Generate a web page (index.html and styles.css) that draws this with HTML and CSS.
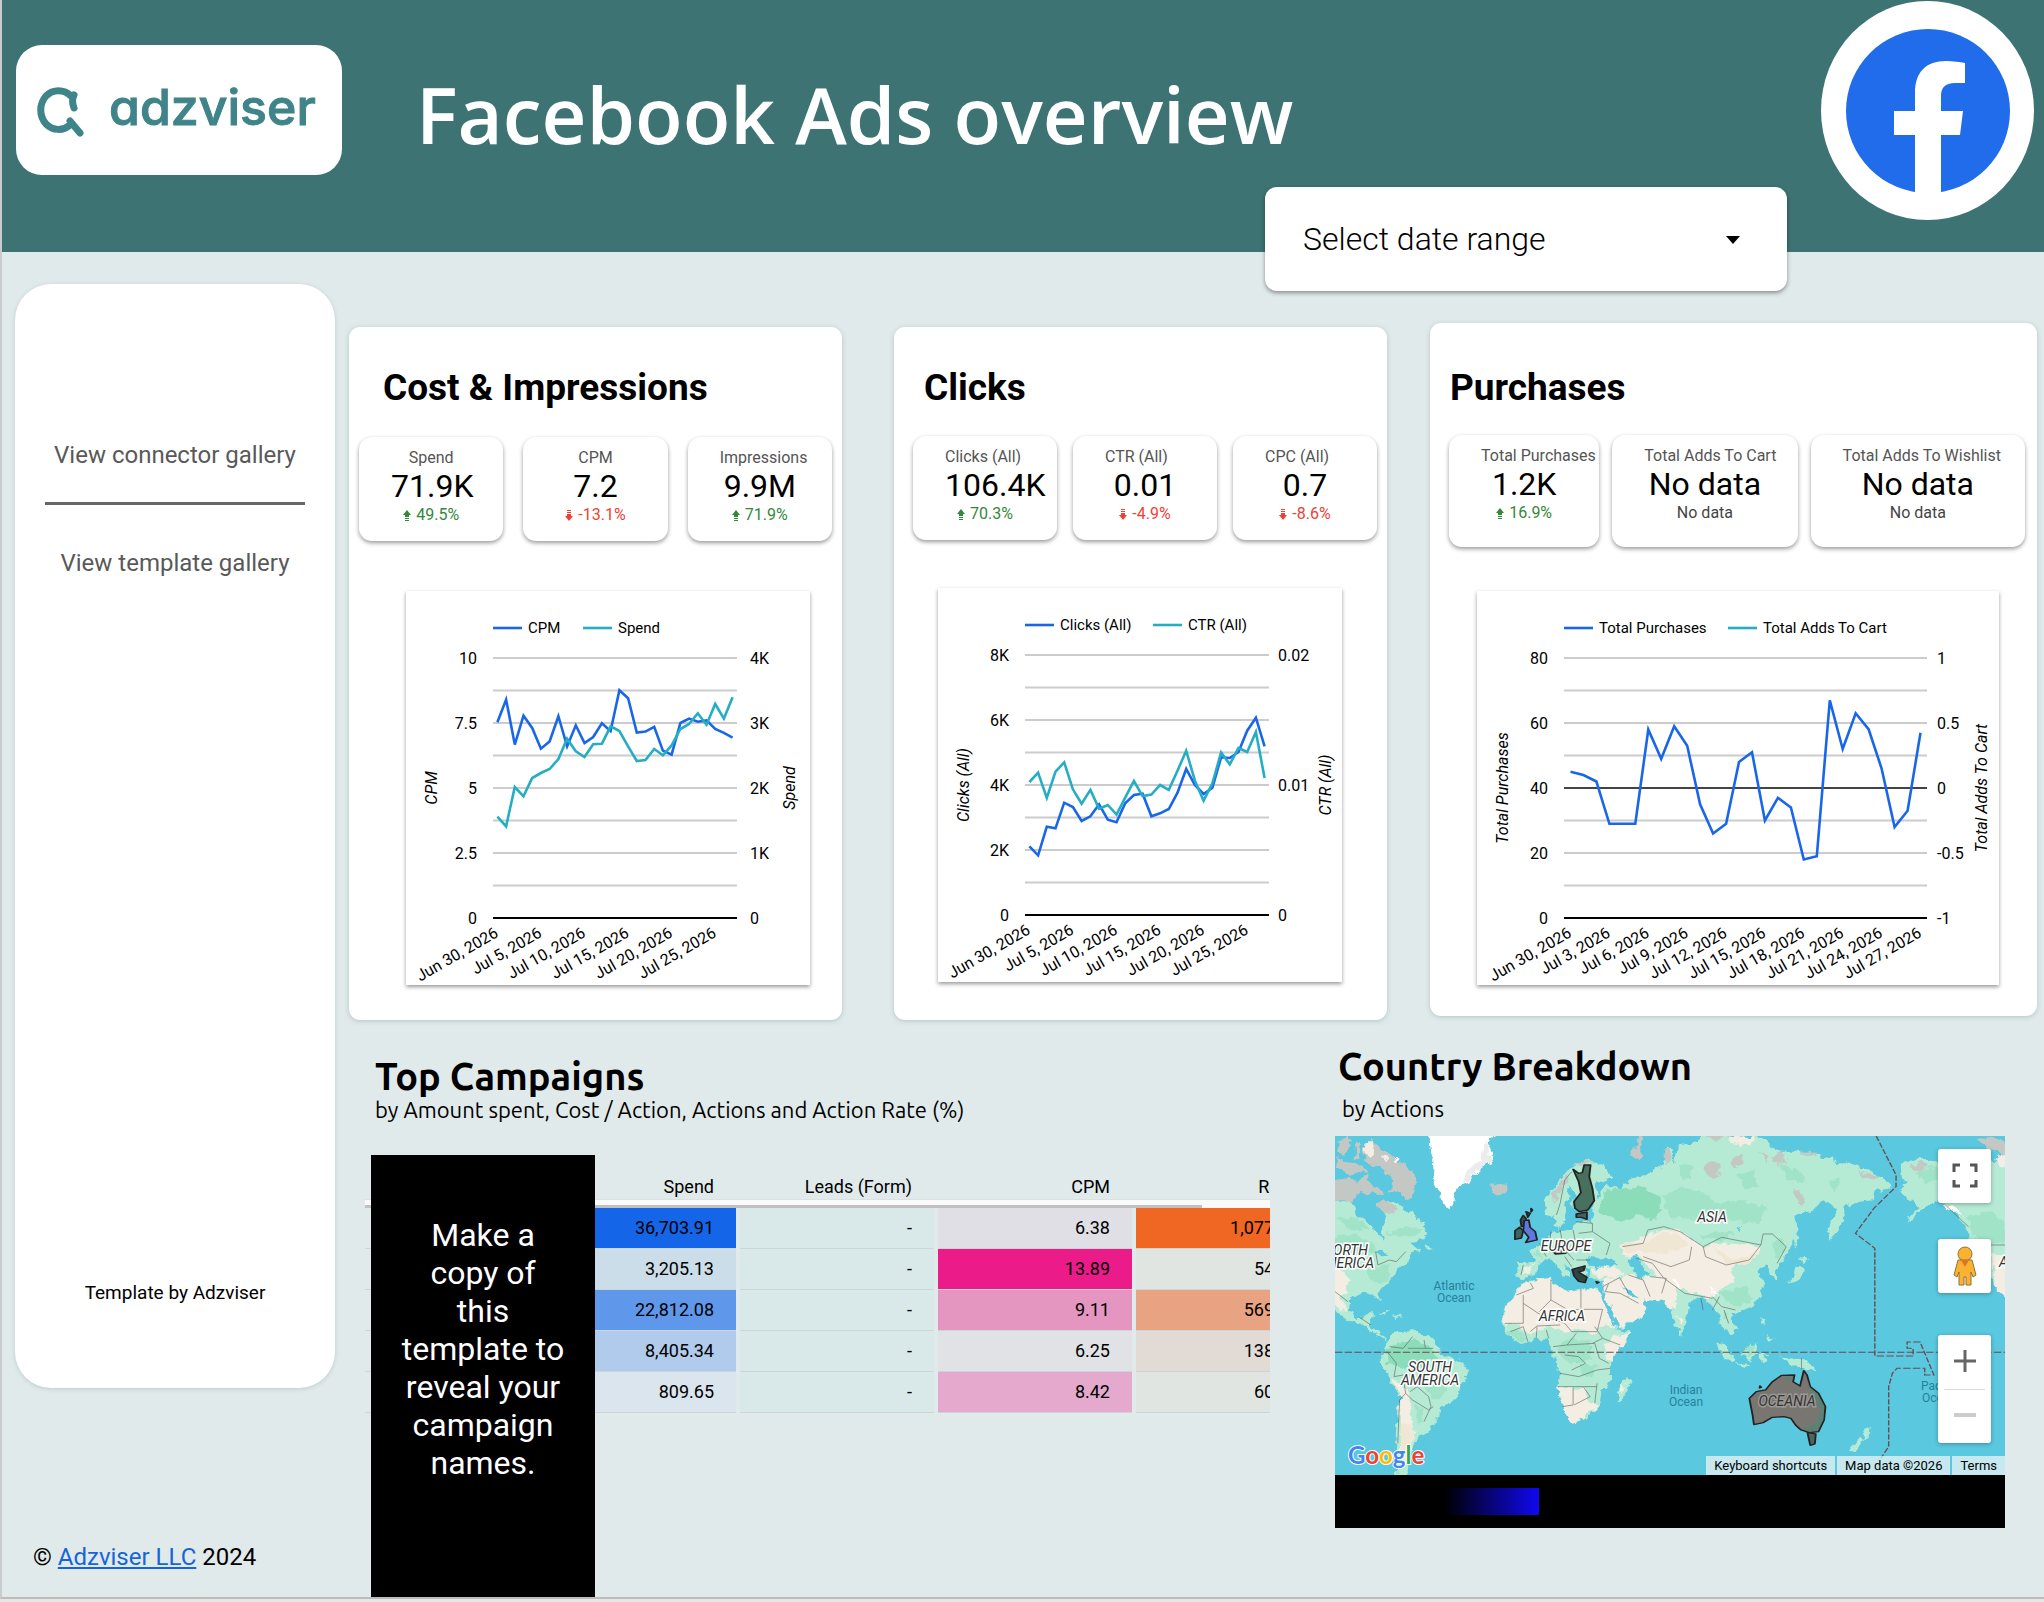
FILE: index.html
```html
<!DOCTYPE html>
<html lang="en">
<head>
    <meta charset="UTF-8">
    <meta name="viewport" content="width=device-width, initial-scale=1.0">
    <title>Facebook Ads overview</title>
    <link rel="stylesheet" href="styles.css">
</head>
<body>
    <div class="page">
        <header class="header">
            <div class="brand">
                <svg class="brand-icon" width="50" height="64" viewBox="0 0 50 64" fill="none" stroke="#3f8488" stroke-width="7" stroke-linecap="round" stroke-linejoin="round">
                    <path d="M37 10 C35 14 35 18 37 23 M34 11 C27 4 16 4 9 11 C2 19 2 31 9 39 C16 46 26 46 33 40"/>
                    <path d="M33 36 L43 48"/>
                </svg>
                <span class="brand-name">adzviser</span>
            </div>
            <h1>Facebook Ads overview</h1>
            <svg class="fb" width="213" height="219" viewBox="0 0 213 219">
                <ellipse cx="106.500" cy="109.500" rx="106.500" ry="109.500" fill="#fff"/>
                <circle cx="107" cy="110" r="82" fill="#206cea"/>
                <path fill="#fff" d="M94 195 V134 H73 V110 H94 V92 C94 71 105 60 125 60 C132 60 139 61 144 62 V82 H134 C124 82 120 87 120 95 V110 H142 L139 134 H120 V195 Z"/>
            </svg>
            <div class="date-range">
                <select aria-label="Date range">
                    <option>Select date range</option>
                </select>
                <svg width="14" height="8" viewBox="0 0 14 8"><path d="M0 0 H14 L7 8 Z"/></svg>
            </div>
        </header>

        <div class="layout">
            <aside class="side">
                <nav class="menu">
                    <a href="#">View connector gallery</a>
                    <hr>
                    <a href="#">View template gallery</a>
                    <p class="credit">Template by Adzviser</p>
                </nav>
                <footer class="copyright">© <a href="#">Adzviser LLC</a> 2024</footer>
            </aside>

            <main class="main">
                <div class="cards">
                    <section class="card cost">
                        <h2>Cost &amp; Impressions</h2>
                        <div class="kpis">
                            <div class="kpi">
                                <div class="label">Spend</div>
                                <div class="value">71.9K</div>
                                <div class="delta up"><svg width="8" height="12" viewBox="0 0 8 12"><path d="M4 0 L8 5 H6 V7 H2 V5 H0 Z M2 8 H6 V9 H2 Z M2 10 H6 V11 H2 Z"/></svg>49.5%</div>
                            </div>
                            <div class="kpi">
                                <div class="label">CPM</div>
                                <div class="value">7.2</div>
                                <div class="delta down"><svg width="8" height="12" viewBox="0 0 8 12"><path d="M4 11 L8 6 H6 V4 H2 V6 H0 Z M2 2 H6 V3 H2 Z M2 0 H6 V1 H2 Z"/></svg>-13.1%</div>
                            </div>
                            <div class="kpi">
                                <div class="label">Impressions</div>
                                <div class="value">9.9M</div>
                                <div class="delta up"><svg width="8" height="12" viewBox="0 0 8 12"><path d="M4 0 L8 5 H6 V7 H2 V5 H0 Z M2 8 H6 V9 H2 Z M2 10 H6 V11 H2 Z"/></svg>71.9%</div>
                            </div>
                        </div>
                        <div class="chart" id="chart-cost"></div>
                    </section>

                    <section class="card clicks">
                        <h2>Clicks</h2>
                        <div class="kpis">
                            <div class="kpi">
                                <div class="label">Clicks (All)</div>
                                <div class="value">106.4K</div>
                                <div class="delta up"><svg width="8" height="12" viewBox="0 0 8 12"><path d="M4 0 L8 5 H6 V7 H2 V5 H0 Z M2 8 H6 V9 H2 Z M2 10 H6 V11 H2 Z"/></svg>70.3%</div>
                            </div>
                            <div class="kpi">
                                <div class="label">CTR (All)</div>
                                <div class="value">0.01</div>
                                <div class="delta down"><svg width="8" height="12" viewBox="0 0 8 12"><path d="M4 11 L8 6 H6 V4 H2 V6 H0 Z M2 2 H6 V3 H2 Z M2 0 H6 V1 H2 Z"/></svg>-4.9%</div>
                            </div>
                            <div class="kpi">
                                <div class="label">CPC (All)</div>
                                <div class="value">0.7</div>
                                <div class="delta down"><svg width="8" height="12" viewBox="0 0 8 12"><path d="M4 11 L8 6 H6 V4 H2 V6 H0 Z M2 2 H6 V3 H2 Z M2 0 H6 V1 H2 Z"/></svg>-8.6%</div>
                            </div>
                        </div>
                        <div class="chart" id="chart-clicks"></div>
                    </section>

                    <section class="card purchases">
                        <h2>Purchases</h2>
                        <div class="kpis">
                            <div class="kpi">
                                <div class="label">Total Purchases</div>
                                <div class="value">1.2K</div>
                                <div class="delta up"><svg width="8" height="12" viewBox="0 0 8 12"><path d="M4 0 L8 5 H6 V7 H2 V5 H0 Z M2 8 H6 V9 H2 Z M2 10 H6 V11 H2 Z"/></svg>16.9%</div>
                            </div>
                            <div class="kpi">
                                <div class="label">Total Adds To Cart</div>
                                <div class="value">No data</div>
                                <div class="delta">No data</div>
                            </div>
                            <div class="kpi">
                                <div class="label">Total Adds To Wishlist</div>
                                <div class="value">No data</div>
                                <div class="delta">No data</div>
                            </div>
                        </div>
                        <div class="chart" id="chart-purchases"></div>
                    </section>
                </div>

                <div class="lower">
                    <section class="campaigns">
                        <h3>Top Campaigns</h3>
                        <p class="sub">by Amount spent, Cost / Action, Actions and Action Rate (%)</p>
                        <div class="table-wrap">
                            <table>
                                <thead>
                                    <tr><th class="name"></th><th>Spend</th><th>Leads (Form)</th><th>CPM</th><th>Reach</th></tr>
                                </thead>
                                <tbody>
                                    <tr><td></td><td style="background-color: #1565e8;">36,703.91</td><td>-</td><td style="background-color: #e1dfe6;">6.38</td><td style="background-color: #f06623;">1,077,214</td></tr>
                                    <tr><td></td><td style="background-color: #cbdde9;">3,205.13</td><td>-</td><td style="background-color: #eb1b8a;">13.89</td><td style="background-color: #e1e5e2;">54,120</td></tr>
                                    <tr><td></td><td style="background-color: #5f98ea;">22,812.08</td><td>-</td><td style="background-color: #e496c1;">9.11</td><td style="background-color: #e8a482;">569,338</td></tr>
                                    <tr><td></td><td style="background-color: #b0cbeb;">8,405.34</td><td>-</td><td style="background-color: #e1e2e6;">6.25</td><td style="background-color: #e2dad5;">138,902</td></tr>
                                    <tr><td></td><td style="background-color: #dbe5ed;">809.65</td><td>-</td><td style="background-color: #e4a9cd;">8.42</td><td style="background-color: #e1e5e2;">60,417</td></tr>
                                </tbody>
                            </table>
                            <div class="scrollbar"></div>
                            <div class="notice">Make a<br>copy of<br>this<br>template to<br>reveal your<br>campaign<br>names.</div>
                        </div>
                    </section>

                    <section class="countries">
                        <h3>Country Breakdown</h3>
                        <p class="sub">by Actions</p>
                        <div class="map">
                            <svg class="map-canvas" viewBox="0 0 670 339">
                                <defs>
                                    <filter id="coast" x="0" y="0" width="100%" height="100%">
                                        <feTurbulence type="fractalNoise" baseFrequency="0.12" numOctaves="3" seed="4"/>
                                        <feDisplacementMap in="SourceGraphic" scale="9" xChannelSelector="R" yChannelSelector="G"/>
                                    </filter>
                                    <clipPath id="frame"><rect width="670" height="339"/></clipPath>
                                </defs>
                                <rect width="670" height="339" fill="#5ac8de"/>
                                <g clip-path="url(#frame)">
                                <g filter="url(#coast)">
                                <g transform="scale(0.4614 0.3333) translate(-32 -318)">
                                    <!-- land -->
                                    <g fill="#b5ead4">
                                        <path d="M20 505 L60 515 78 530 82 560 110 585 128 615 138 635 134 590 142 565 136 545 142 512 165 518 185 550 200 545 225 590 232 608 225 630 195 635 200 645 215 662 195 672 190 700 165 715 157 740 140 770 128 788 134 815 118 800 110 790 90 792 65 805 62 840 75 868 90 862 100 850 118 850 105 880 118 905 140 920 150 930 135 925 110 905 90 885 65 875 45 855 20 830 Z M225 645 L245 658 228 660 Z"/>
                                        <path d="M150 912 L165 905 180 908 215 905 240 925 255 945 262 970 290 985 318 1005 320 1030 305 1060 300 1100 285 1115 262 1135 255 1160 235 1200 215 1215 205 1240 195 1265 190 1300 185 1345 165 1345 162 1260 165 1180 175 1100 155 1060 135 1010 132 985 145 950 Z"/>
                                        <path d="M438 755 L480 748 500 742 508 765 540 788 570 775 605 780 612 800 625 850 645 895 672 905 665 935 640 970 628 1000 628 1060 610 1080 605 1120 590 1150 570 1170 545 1178 530 1150 515 1080 520 1030 505 975 500 950 490 930 465 925 435 942 415 925 395 890 395 850 420 790 Z"/>
                                        <path d="M665 1040 L670 1060 655 1112 645 1118 645 1085 Z"/>
                                        <path d="M485 530 L490 505 520 450 545 410 575 388 610 405 632 440 620 460 600 450 600 520 575 545 560 540 552 490 542 470 532 520 527 580 515 598 508 560 490 555 Z"/>
                                        <path d="M428 695 L465 698 470 690 452 662 480 645 500 605 540 600 550 575 590 575 590 540 600 505 620 465 650 480 660 460 690 440 720 430 745 400 748 350 762 355 765 400 780 345 820 335 825 308 900 318 960 325 975 345 1000 365 1060 365 1110 390 1150 405 1190 420 1220 445 1240 470 1220 485 1205 475 1200 510 1170 515 1140 530 1135 560 1122 600 1106 632 1102 590 1120 540 1095 515 1060 545 1030 560 1032 600 1022 645 1005 690 990 700 990 752 975 735 970 705 945 720 962 760 955 800 935 830 895 850 890 870 905 890 895 912 880 900 868 880 862 850 850 840 835 800 820 805 800 820 795 860 782 918 765 870 760 825 740 812 700 805 690 810 708 840 695 870 645 893 630 850 612 790 614 755 585 745 580 720 570 705 575 735 560 755 548 725 530 705 540 735 530 740 505 690 490 688 474 700 465 735 435 747 427 738 Z"/>
                                        <path d="M1035 710 L1046 712 1040 750 1010 762 1030 735 Z M1040 680 L1058 692 1045 702 Z M1025 588 L1036 620 1030 660 1024 620 Z"/>
                                        <path d="M857 935 L880 950 902 990 892 1002 870 970 Z M913 965 L945 932 950 965 930 995 915 985 Z M895 1000 L930 1006 920 1014 Z M952 972 L978 968 962 975 970 995 958 1002 Z M956 860 L965 865 960 890 Z M968 915 L985 925 975 935 Z M1000 980 L1045 985 1082 1028 1050 1015 1020 1005 Z"/>
                                        <path d="M1185 1190 L1194 1210 1175 1235 1178 1212 Z M1165 1225 L1175 1232 1160 1265 1146 1262 Z"/>
                                        <path d="M1260 440 L1258 405 1300 380 1335 395 1500 395 1500 820 1465 770 1450 730 1425 660 1400 600 1370 540 1340 510 1310 535 1265 585 1298 530 1280 510 1252 480 1272 460 Z"/>
                                        <path d="M122 842 L150 848 140 852 Z M158 856 L178 858 168 864 Z M246 440 L258 445 255 480 246 470 Z M362 375 L376 380 370 400 Z"/>
                                    </g>
                                    <g fill="#c4c8c4">
                                        <path d="M20 455 L60 440 80 458 100 430 112 460 122 480 105 500 88 485 75 505 65 522 45 505 20 512 Z"/>
                                        <path d="M95 350 L110 330 125 350 150 370 165 392 185 400 195 430 208 455 204 480 190 512 178 495 165 478 150 485 160 455 140 420 118 405 95 390 Z"/>
                                        <path d="M40 330 L60 325 65 345 50 375 38 370 Z M75 340 L88 335 85 385 75 395 Z M35 385 L65 400 90 410 100 425 70 435 45 425 32 415 Z M118 470 L135 480 138 498 118 490 Z M122 520 L140 510 165 530 160 550 140 550 Z"/>
                                        <path d="M366 465 L385 458 402 466 406 480 390 497 374 488 Z"/>
                                        <path d="M692 318 L705 318 690 350 698 388 682 385 676 368 Z M742 360 L756 350 762 380 750 410 Z"/>
                                        <path d="M835 400 L865 400 865 440 850 445 830 420 Z M890 380 L915 375 915 400 895 415 Z M980 375 L1000 365 1010 400 990 405 Z M1165 420 L1215 440 1200 455 1170 435 Z M830 318 L880 318 860 335 Z M1025 470 L1050 500 1045 530 1030 500 Z M755 540 L770 535 768 565 Z M950 365 L970 375 965 395 Z M1035 365 L1075 368 1060 382 Z"/>
                                        <path d="M1275 410 L1300 395 1320 410 1300 425 Z M1430 320 L1500 340 1500 390 1440 350 Z M500 495 L520 460 545 420 530 460 505 520 Z M550 400 L575 390 590 400 565 405 Z"/>
                                    </g>
                                    <!-- forests -->
                                    <g fill="#8bdcb9">
                                        <path d="M600 545 L620 480 660 478 700 470 735 500 740 540 720 570 690 555 650 575 Z"/>
                                        <path d="M140 960 L180 935 205 925 240 955 252 990 205 1020 165 1010 145 1000 Z"/>
                                        <path d="M545 945 L570 940 590 955 585 985 555 1000 535 980 Z"/>
                                    </g>
                                    <g fill="#a0e3c7">
                                        <path d="M515 950 L545 925 585 935 590 985 550 1000 520 985 Z M400 900 L425 900 450 925 435 938 Z M560 1005 L600 1010 590 1040 565 1035 Z"/>
                                        <path d="M32 620 L60 610 110 630 120 670 60 660 32 640 Z M100 720 L150 700 145 750 115 760 Z M35 560 L80 565 110 600 60 595 Z M140 610 L190 590 225 600 190 625 Z"/>
                                        <path d="M740 500 L780 470 840 490 860 520 920 510 970 540 950 580 880 570 820 570 760 560 Z M900 430 L940 420 950 470 920 480 Z M820 620 L850 605 900 615 870 630 Z M1100 450 L1130 440 1110 490 Z M1000 400 L1040 430 1050 460 1010 450 Z M780 400 L810 410 800 450 780 440 Z"/>
                                        <path d="M860 790 L920 770 940 810 900 830 Z M920 955 L940 945 938 975 925 985 Z M1400 560 L1450 540 1484 580 1484 640 1430 640 Z M975 640 L1000 620 1010 660 990 680 Z M870 850 L885 850 882 880 Z"/>
                                        <path d="M225 1070 L260 1050 280 1080 250 1110 Z M205 1130 L225 1140 215 1190 Z M540 520 L550 500 555 540 Z M460 670 L480 660 485 685 Z"/>
                                        <path d="M1290 430 L1330 410 1350 440 1310 460 Z"/>
                                    </g>
                                    <!-- arid areas -->
                                    <g fill="#f4ede3">
                                        <path d="M438 757 L480 750 500 745 508 767 540 790 570 778 605 783 612 800 625 850 645 895 632 890 605 890 600 915 560 900 530 905 500 890 455 908 425 885 397 885 397 850 420 795 Z"/>
                                        <path d="M615 945 L650 912 672 905 665 935 638 970 632 995 618 985 Z"/>
                                        <path d="M513 1070 L548 1074 575 1072 583 1110 598 1130 572 1168 545 1178 530 1150 Z"/>
                                        <path d="M612 752 L640 742 668 735 700 745 730 735 690 680 655 680 650 645 690 630 745 592 790 610 830 650 870 640 955 645 950 675 905 700 890 720 900 745 850 800 800 788 770 770 775 800 765 835 740 812 700 805 708 840 695 868 645 891 630 850 612 790 Z"/>
                                        <path d="M582 716 L640 712 658 730 640 742 600 744 Z M440 705 L462 705 455 735 438 735 Z"/>
                                        <path d="M20 715 L50 722 62 750 55 790 45 800 62 845 45 840 20 810 Z"/>
                                        <path d="M172 1070 L192 1080 196 1150 202 1200 198 1260 188 1300 172 1285 175 1180 Z M155 1045 L175 1060 172 1085 Z"/>
                                        <path d="M1455 670 L1500 680 1500 820 1462 770 Z M880 318 L945 322 930 345 890 340 Z M1462 380 L1500 370 1500 420 1470 410 Z M100 335 L115 340 110 380 98 375 Z M130 375 L150 385 145 400 Z"/>
                                        <path d="M655 1060 L662 1065 652 1095 Z M775 855 L785 865 780 885 Z M550 850 L560 855 555 860 Z"/>
                                    </g>
                                    <path fill="#efe6d4" d="M655 640 L700 640 745 600 780 615 795 650 760 670 700 665 660 670 Z M850 650 L900 690 950 670 930 700 880 705 Z M175 1180 L200 1190 195 1250 175 1260 Z"/>
                                    <!-- inland seas -->
                                    <path fill="#5ac8de" d="M580 690 L590 675 610 690 620 682 648 705 610 712 582 710 Z M668 690 L685 672 700 712 712 738 690 742 678 715 Z M655 768 L675 790 690 805 672 800 Z M606 782 L614 785 640 865 648 893 634 885 Z M120 665 L130 660 150 680 135 682 Z M905 590 L912 580 908 605 Z"/>
                                    <path fill="#fff" d="M232 308 L382 308 365 345 375 370 372 400 350 415 330 440 320 460 300 470 288 500 285 535 270 528 262 505 250 470 245 430 245 380 Z"/>
                                    <path fill="#ececec" d="M362 325 L372 395 335 425 320 455 300 462 325 415 345 390 Z"/>
                                    <path fill="#fff" d="M770 745 L788 775 778 770 765 750 Z M845 765 L865 795 848 785 Z M1330 500 L1345 515 1380 540 1395 565 1360 535 Z M155 375 L170 390 165 398 Z"/>
                                </g>
                                </g>
                                <g transform="scale(0.4614 0.3333) translate(-32 -318)">
                                    <!-- borders -->
                                    <g class="borders">
                                        <path d="M455 758 L462 775 425 795 M440 795 L440 880 400 880 M440 820 L478 855 530 880 M500 748 L500 810 540 842 M565 775 L565 838 612 838 M500 810 L475 845 M540 842 L560 838 M530 880 L545 905 600 905 612 838 M455 905 L470 888 520 885 M412 905 L440 890 450 935 M470 890 L468 925 M490 900 L495 925 M505 950 L535 945 555 910 M535 945 L595 940 605 985 625 1000 M530 975 L560 980 575 1000 545 1020 M520 1030 L560 1040 600 1020 628 1015 M515 1070 L600 1070 M548 1072 L548 1125 525 1130 M570 1070 L585 1100 550 1125 M600 1060 L595 1120 M595 890 L612 925 590 940 M612 925 L650 945"/>
                                        <path d="M612 770 L650 742 M625 760 L618 785 650 790 690 820 M650 745 L668 790 M668 735 L700 750 715 800 M715 740 L750 745 740 790 M685 685 L720 700 745 745 M655 650 L700 640 710 600 745 590 780 605 830 650 M700 680 L760 710 800 690 805 650 M745 745 L790 790 850 805 M830 650 L870 622 955 645 930 690 880 705 835 680 830 650 M955 645 L960 612 980 612 1010 650 990 700 M850 800 L870 830 900 840 M825 805 L830 840 M865 800 L850 840 M875 840 L885 880"/>
                                        <path d="M545 425 L530 450 520 520 512 555 M555 575 L590 580 590 605 560 610 M520 600 L525 640 M548 600 L555 650 M590 605 L628 640 620 675 M500 605 L495 660 M490 665 L530 660 550 690 M530 680 L545 710 M555 690 L585 690 M475 640 L490 680 M440 705 L435 735"/>
                                        <path d="M120 665 L125 705 150 690 165 695 185 665 M32 785 L60 815 M85 862 L110 885 M150 950 L180 955 200 920 M190 955 L245 955 M225 930 L228 955 M145 965 L165 1000 160 1040 180 1035 M195 1085 L210 1070 235 1100 M180 1040 L185 1090 200 1110 235 1140 245 1130 M168 1240 L172 1110 185 1090 M235 1100 L240 1130 225 1175"/>
                                        <path d="M1450 645 H1484 M1340 505 L1370 545 1405 590 M1043 985 V1018"/>
                                    </g>
                                    <!-- countries with data -->
                                    <g class="shaded">
                                        <path fill="#47705f" d="M548 418 L560 430 568 428 572 405 586 405 583 440 590 475 594 512 580 540 562 545 552 535 550 515 565 488 560 455 Z"/>
                                        <path fill="#47605a" d="M555 552 L578 546 578 568 566 562 555 562 Z"/>
                                        <path fill="#3c4a5a" d="M434 570 L440 556 446 565 445 585 436 590 Z M446 545 L455 550 450 562 Z M457 535 L460 540 457 546 Z"/>
                                        <path fill="#5f78e0" d="M442 572 L452 570 455 592 466 605 470 630 445 638 452 622 440 602 Z"/>
                                        <path fill="#3e6468" d="M422 602 L432 592 440 602 436 624 422 628 Z"/>
                                        <path fill="#5d6864" d="M502 662 L520 652 538 655 532 670 510 672 Z"/>
                                        <path fill="#2f4644" d="M546 718 L574 708 571 722 560 726 578 742 574 758 560 754 550 738 Z M598 755 L604 757 600 760 Z"/>
                                        <path fill="#797672" d="M930 1105 L945 1085 965 1080 980 1055 1000 1036 1028 1035 1025 1055 1040 1068 1048 1022 1055 1035 1062 1070 1080 1090 1095 1130 1092 1170 1080 1205 1060 1208 1042 1200 1030 1185 1020 1165 1005 1160 980 1162 960 1178 940 1184 937 1155 Z"/>
                                        <path fill="#50645c" d="M1056 1208 L1074 1212 1072 1242 1062 1246 Z M953 1068 L956 1072 952 1074 Z"/>
                                    </g>
                                    <path fill="#5a8274" d="M1055 1045 L1062 1075 1078 1092 1092 1130 1090 1170 1078 1200 1060 1204 1045 1195 1075 1180 1085 1140 1065 1100 Z M1005 1042 L1022 1042 1018 1055 Z"/>
                                    <!-- equator and date line -->
                                    <path class="dateline" d="M32 967 H1484 M1205 318 L1248 435 1248 470 1200 535 1160 610 1202 655 V978 H1285 V955 H1272 V936 H1300 L1330 1035 H1310 V1015 H1250 L1240 1030 1232 1070 V1250 L1215 1285"/>
                                </g>
                                </g>
                                <g class="places">
                                    <text x="377" y="86">ASIA</text>
                                    <text x="231" y="115">EUROPE</text>
                                    <text x="227" y="185">AFRICA</text>
                                    <text x="95" y="236">SOUTH</text>
                                    <text x="95" y="249">AMERICA</text>
                                    <text x="33" y="119" class="end">ORTH</text>
                                    <text x="39" y="132" class="end">MERICA</text>
                                    <text x="664" y="131" class="start">A</text>
                                    <text x="452" y="270" class="grey">OCEANIA</text>
                                </g>
                                <g class="oceans">
                                    <text x="119" y="154">Atlantic</text>
                                    <text x="119" y="166">Ocean</text>
                                    <text x="351" y="258">Indian</text>
                                    <text x="351" y="270">Ocean</text>
                                    <text x="604" y="254">Pacific</text>
                                    <text x="604" y="266">Ocean</text>
                                </g>
                                <text class="google" x="13" y="328"><tspan fill="#4285f4">G</tspan><tspan fill="#ea4335">o</tspan><tspan fill="#fbbc05">o</tspan><tspan fill="#4285f4">g</tspan><tspan fill="#34a853">l</tspan><tspan fill="#ea4335">e</tspan></text>
                            </svg>
                            <div class="controls">
                                <button class="btn" aria-label="Toggle fullscreen view">
                                    <svg width="26" height="26" viewBox="0 0 26 26" fill="none" stroke="#555" stroke-width="3"><path d="M2 9 V2 H8 M18 2 H24 V9 M24 17 V23 H18 M8 23 H2 V17"/></svg>
                                </button>
                                <button class="btn" aria-label="Street View Pegman">
                                    <svg width="24" height="40" viewBox="0 0 24 40" stroke="#8a7340" stroke-width="1"><circle cx="12" cy="8" r="7" fill="#fbb230"/><path fill="#fbb230" d="M5 14 H19 L23 29 20 31 18 26 V39 H13 V31 H11 V39 H6 V26 L4 31 1 29 Z"/><path fill="#dd7526" stroke="none" d="M8 14 H16 L12 21 Z"/></svg>
                                </button>
                                <div class="zoom">
                                    <button aria-label="Zoom in"><svg width="24" height="24" viewBox="0 0 24 24" stroke="#666" stroke-width="3"><path d="M12 1 V23 M1 12 H23"/></svg></button>
                                    <button aria-label="Zoom out"><svg width="24" height="24" viewBox="0 0 24 24" stroke="#ccc" stroke-width="4"><path d="M1 12 H23"/></svg></button>
                                </div>
                            </div>
                            <div class="attribution">
                                <button>Keyboard shortcuts</button>
                                <span>Map data ©2026</span>
                                <a href="#">Terms</a>
                            </div>
                        </div>
                        <div class="legend"><div class="ramp"></div></div>
                    </section>
                </div>
            </main>
        </div>
    </div>
    <script src="charts.js"></script>
</body>
</html>
```
FILE: styles.css
```css
* {
    box-sizing: border-box;
    margin: 0;
    padding: 0;
}

body {
    font-family: Roboto, Arial, sans-serif;
    color: #000;
    background-color: #e6e6e6;
}

button,
select {
    font-family: inherit;
    border: none;
    background: none;
    cursor: pointer;
}

.page {
    background-color: #e1eaeb;
    border-left: 2px solid #c9cccc;
    border-bottom: 2px solid #bcbcbc;
}

/* Header */
.header {
    position: relative;
    display: flex;
    align-items: flex-start;
    height: 252px;
    padding: 1px 10px 0 14px;
    background-color: #3e7373;
}

.brand {
    display: flex;
    align-items: center;
    gap: 22px;
    width: 326px;
    height: 130px;
    margin-top: 44px;
    padding: 0 0 6px 21px;
    background-color: #fff;
    border-radius: 26px;
}

.brand-icon {
    margin-top: 20px;
}

.brand-name {
    font-family: Inter, sans-serif;
    font-size: 50px;
    font-weight: 500;
    line-height: 60px;
    font-feature-settings: "cv11";
    color: #3f8488;
    -webkit-text-stroke: 1px #3f8488;
    stroke-linejoin: round;
}

h1 {
    flex: 1;
    margin: 64px 0 0 74px;
    font-family: "Trebuchet MS", "Open Sans", sans-serif;
    font-size: 78px;
    font-weight: 600;
    line-height: 98px;
    white-space: nowrap;
    color: #fff;
}

.date-range {
    position: absolute;
    top: 187px;
    right: 257px;
    width: 522px;
    height: 104px;
    background-color: #fff;
    border-radius: 12px;
    box-shadow: 0 2px 4px rgba(0, 0, 0, 0.4);
}

.date-range select {
    appearance: none;
    width: 100%;
    height: 100%;
    padding: 0 38px;
    font-size: 32px;
    font-weight: 300;
    color: #000;
}

.date-range svg {
    position: absolute;
    top: 49px;
    right: 47px;
    pointer-events: none;
}

/* Layout */
.layout {
    display: grid;
    grid-template-columns: 320px minmax(0, 1fr);
    gap: 14px;
    padding: 32px 7px 0 13px;
}

.side {
    display: flex;
    flex-direction: column;
}

.menu {
    flex: 1;
    display: flex;
    flex-direction: column;
    align-items: center;
    padding: 155px 30px 83px;
    background-color: #fff;
    border-radius: 36px;
    box-shadow: 0 1px 4px rgba(62, 115, 115, 0.25);
}

.menu a {
    font-size: 24px;
    line-height: 32px;
    color: #595959;
    text-decoration: none;
}

.menu hr {
    width: 100%;
    height: 3px;
    margin: 31px 0 42px;
    border: none;
    background-color: #666;
}

.credit {
    margin-top: auto;
    font-size: 19px;
    line-height: 24px;
}

.copyright {
    padding: 153px 0 24px 18px;
    font-size: 24px;
    line-height: 32px;
}

.copyright a {
    color: #1565d8;
}

.main {
    padding-top: 39px;
}

.cards {
    display: grid;
    grid-template-columns: minmax(0, 502fr) minmax(0, 493fr) minmax(0, 607fr);
    gap: 43px;
    align-items: start;
}

.card {
    margin-top: 4px;
    padding: 37px 0 35px;
    background-color: #fff;
    border-radius: 11px;
    box-shadow: 0 1px 5px rgba(62, 115, 115, 0.3);
}

.card h2 {
    padding-left: 34px;
    font-size: 37px;
    line-height: 48px;
}

.cost {
    margin-right: 9px;
}

.kpis {
    display: grid;
    grid-template-columns: repeat(3, minmax(0, 1fr));
    gap: 20px;
    margin: 25px 10px 50px;
}

.kpi {
    min-height: 104px;
    padding: 10px 32px 0;
    text-align: center;
    white-space: nowrap;
    border-radius: 13px;
    box-shadow: 0 2px 4px rgba(0, 0, 0, 0.4);
}

.label {
    font-size: 16px;
    line-height: 22px;
    color: #555;
}

.value {
    font-size: 32px;
    line-height: 34px;
}

.delta {
    font-size: 16px;
    line-height: 24px;
    color: #444;
}

.delta svg {
    margin-right: 5px;
    vertical-align: -2px;
    fill: currentColor;
}

.delta.up {
    color: #34883a;
}

.delta.down {
    color: #ee3f35;
}

.chart {
    margin: 0 32px 0 57px;
    background-color: #fff;
    box-shadow: 0 2px 4px rgba(0, 0, 0, 0.4);
}

.chart svg {
    display: block;
    width: 100%;
}

.clicks h2 {
    padding-left: 30px;
}

.clicks .kpis {
    gap: 16px;
    margin: 24px 10px 48px 19px;
}

.clicks .chart {
    margin: 0 45px 0 44px;
}

.clicks {
    padding-bottom: 38px;
}

.clicks .label,
.purchases .label {
    text-align: left;
}

.purchases {
    margin-top: 0;
    padding-top: 41px;
    padding-bottom: 31px;
}

.purchases h2 {
    padding-left: 20px;
}

.purchases .kpis {
    grid-template-columns: minmax(0, 150fr) minmax(0, 185fr) minmax(0, 214fr);
    gap: 13px;
    margin: 23px 12px 44px 19px;
}

.purchases .kpi {
    min-height: 112px;
}

.purchases .chart {
    margin: 0 38px 0 47px;
}

/* Chart drawing */
.chart text {
    font-size: 16px;
}

.chart .key {
    font-size: 15px;
}

.chart .axis {
    font-style: italic;
    text-anchor: middle;
}

.chart .right {
    text-anchor: end;
}

.grid {
    stroke: #ccc;
    stroke-width: 2;
}

.grid.zero {
    stroke: #444;
}

.grid.base {
    stroke: #000;
}

.line {
    fill: none;
    stroke-width: 2.6;
}

/* Campaigns and map */
.lower {
    display: grid;
    grid-template-columns: minmax(0, 905fr) minmax(0, 670fr);
    gap: 65px;
    padding: 24px 32px 0 16px;
}

h3 {
    font-family: Ubuntu, "Noto Sans", sans-serif;
    font-size: 38px;
    line-height: 44px;
}

.sub {
    font-family: Ubuntu, "Noto Sans", sans-serif;
    font-size: 22px;
    line-height: 24px;
}

.campaigns {
    padding-top: 10px;
}

.campaigns h3,
.campaigns .sub {
    padding-left: 10px;
}

.table-wrap {
    position: relative;
    height: 442px;
    margin-top: 33px;
    overflow: hidden;
}

table {
    width: 973px;
    margin-left: -4px;
    table-layout: fixed;
    border-collapse: separate;
    border-spacing: 4px 0;
    font-size: 18px;
    line-height: 24px;
}

th {
    width: 194px;
    height: 53px;
    padding: 10px 22px 0 0;
    font-weight: 400;
    text-align: right;
}

th.name {
    width: 173px;
}

td {
    height: 41px;
    padding-right: 22px;
    text-align: right;
    background-color: #d9e9e9;
    border-bottom: 1px solid #cdd6d6;
}

td:first-child {
    background: none;
}

.scrollbar {
    position: absolute;
    top: 44px;
    left: 0;
    right: 0;
    height: 9px;
    background: linear-gradient(90deg, #c0c0c0, #c0c0c0) 0 100% / 837px 3px no-repeat #fafafa;
    border-top: 1px solid #dde0e0;
}

.notice {
    position: absolute;
    top: 0;
    left: 6px;
    width: 224px;
    height: 100%;
    padding: 61px 28px;
    font-size: 32px;
    line-height: 38px;
    text-align: center;
    color: #fff;
    background-color: #000;
}

.countries h3 {
    padding-left: 3px;
}

.countries .sub {
    margin: 9px 0 15px;
    padding-left: 7px;
}

.map {
    position: relative;
}

.map-canvas {
    display: block;
    width: 100%;
}

.borders {
    fill: none;
    stroke: #555;
    stroke-width: 2;
    opacity: 0.7;
}

.shaded {
    stroke: #222;
    stroke-width: 4;
    stroke-linejoin: round;
}

.dateline {
    fill: none;
    stroke: #6b4a50;
    stroke-width: 3;
    stroke-dasharray: 16 5;
}

.places text {
    font-size: 14px;
    font-style: italic;
    text-anchor: middle;
    fill: #333;
    stroke: #fff;
    stroke-width: 3px;
    paint-order: stroke;
}

.places .end {
    text-anchor: end;
}

.places .start {
    text-anchor: start;
}

.places .grey {
    stroke: #9a9894;
}

.oceans text {
    font-size: 12px;
    text-anchor: middle;
    fill: #27809c;
}

.google {
    font-family: Lato, sans-serif;
    font-size: 24px;
    font-weight: 700;
    stroke: #fff;
    stroke-width: 2px;
    paint-order: stroke;
}

.controls {
    position: absolute;
    top: 13px;
    right: 14px;
    display: flex;
    flex-direction: column;
    width: 53px;
}

.btn,
.zoom {
    background-color: #fff;
    border-radius: 3px;
    box-shadow: 0 1px 4px rgba(0, 0, 0, 0.3);
}

.btn {
    display: flex;
    align-items: center;
    justify-content: center;
    height: 54px;
    margin-bottom: 36px;
}

.zoom {
    display: flex;
    flex-direction: column;
    margin-top: 6px;
    padding: 0 6px;
}

.zoom button {
    height: 54px;
}

.zoom button + button {
    border-top: 1px solid #ddd;
}

.attribution {
    position: absolute;
    right: 0;
    bottom: 0;
    display: flex;
    gap: 2px;
}

.attribution > * {
    padding: 0 8px;
    font-size: 13px;
    line-height: 19px;
    color: #000;
    text-decoration: none;
    background-color: rgba(245, 245, 245, 0.7);
}

.legend {
    padding: 13px 0 13px 109px;
    background-color: #000;
}

.ramp {
    width: 95px;
    height: 27px;
    background: linear-gradient(90deg, #000, #1008f0);
}
```
FILE: charts.js
```js
const BLUE = '#1967e8';
const TEAL = '#25adc4';
const TOP = 67;
const BOTTOM = 327;

const dayLabel = i => (i === 0 ? 'Jun 30, 2026' : `Jul ${i}, 2026`);

const drawChart = (id, c) => {
    const left = 87;
    const right = c.width - c.marginRight;
    const step = (right - left) / 28;
    const parts = [];

    // gridlines, every second one carries a label
    for (let i = 0; i <= 8; i++) {
        const y = BOTTOM - (i * (BOTTOM - TOP)) / 8;
        const cls = i === 0 ? 'grid base' : i === c.zeroAt ? 'grid zero' : 'grid';
        parts.push(`<line class="${cls}" x1="${left}" y1="${y}" x2="${right}" y2="${y}"/>`);
    }
    [c.leftTicks, c.rightTicks].forEach((ticks, side) => {
        ticks.forEach((tick, i) => {
            const y = BOTTOM + 6 - (i * (BOTTOM - TOP)) / (ticks.length - 1);
            const x = side === 0 ? 71 : c.tickX;
            parts.push(`<text class="${side === 0 ? 'right' : ''}" x="${x}" y="${y}">${tick}</text>`);
        });
    });

    c.series.forEach(s => {
        const points = s.data
            .map((v, i) => `${(left + step * (i + 0.5)).toFixed(1)},${(BOTTOM - (v / s.max) * (BOTTOM - TOP)).toFixed(1)}`)
            .join(' ');
        if (points) {
            parts.push(`<polyline class="line" stroke="${s.color}" points="${points}"/>`);
        }
        parts.push(`<line class="line" stroke="${s.color}" x1="${s.keyX}" y1="37" x2="${s.keyX + 29}" y2="37"/>`);
        parts.push(`<text class="key" x="${s.keyX + 35}" y="42">${s.name}</text>`);
    });

    [[31, c.series[0].name], [c.titleX, c.series[1].name]].forEach(([x, name]) => {
        parts.push(`<text class="axis" transform="translate(${x} 197) rotate(-90)">${name}</text>`);
    });

    for (let i = 0; i < 28; i += c.every) {
        const x = (left + step * (i + 0.5) + 2).toFixed(1);
        parts.push(`<text class="right" transform="translate(${x} 345) rotate(-30)">${dayLabel(i)}</text>`);
    }

    document.getElementById(id).innerHTML = `<svg viewBox="0 0 ${c.width} 394">${parts.join('')}</svg>`;
};

drawChart('chart-cost', {
    width: 404,
    marginRight: 73,
    tickX: 344,
    titleX: 389,
    every: 5,
    leftTicks: ['0', '2.5', '5', '7.5', '10'],
    rightTicks: ['0', '1K', '2K', '3K', '4K'],
    series: [
        { name: 'CPM', color: BLUE, keyX: 87, max: 10, data: [7.53, 8.4, 6.67, 7.78, 7.31, 6.51, 6.79, 7.76, 6.6, 7.41, 6.73, 6.96, 7.49, 7.19, 8.76, 8.45, 7.13, 7.17, 7.35, 6.44, 6.28, 7.5, 7.67, 7.55, 7.6, 7.27, 7.12, 6.94] },
        { name: 'Spend', color: TEAL, keyX: 177, max: 4000, data: [1559, 1410, 2015, 1872, 2154, 2231, 2292, 2446, 2759, 2564, 2477, 2672, 2682, 2949, 2877, 2641, 2415, 2431, 2600, 2503, 2656, 2908, 2985, 3149, 2974, 3292, 3067, 3395] }
    ]
});

drawChart('chart-clicks', {
    width: 404,
    marginRight: 73,
    tickX: 340,
    titleX: 393,
    every: 5,
    leftTicks: ['0', '2K', '4K', '6K', '8K'],
    rightTicks: ['0', '0.01', '0.02'],
    series: [
        { name: 'Clicks (All)', color: BLUE, keyX: 87, max: 8000, data: [2113, 1836, 2718, 2667, 3456, 3323, 2892, 3036, 3405, 2933, 2851, 3436, 3692, 3733, 3036, 3128, 3262, 3764, 4492, 4000, 3723, 3918, 4851, 4831, 5015, 5672, 6072, 5190] },
        { name: 'CTR (All)', color: TEAL, keyX: 215, max: 0.02, data: [0.01023, 0.01095, 0.009, 0.01103, 0.01174, 0.00967, 0.00856, 0.00962, 0.00818, 0.00846, 0.00772, 0.00903, 0.01031, 0.00915, 0.00926, 0.01, 0.00962, 0.0111, 0.01264, 0.01033, 0.00879, 0.01013, 0.01251, 0.01159, 0.01285, 0.01254, 0.01408, 0.01054] }
    ]
});

drawChart('chart-purchases', {
    width: 522,
    marginRight: 72,
    tickX: 460,
    titleX: 510,
    every: 3,
    zeroAt: 4,
    leftTicks: ['0', '20', '40', '60', '80'],
    rightTicks: ['-1', '-0.5', '0', '0.5', '1'],
    series: [
        { name: 'Total Purchases', color: BLUE, keyX: 87, max: 80, data: [45, 44, 42, 29, 29, 29, 58, 49, 59, 53, 35, 26, 29, 48, 51, 30, 37, 34, 18, 19, 67, 52, 63, 58, 46, 28, 33, 57] },
        { name: 'Total Adds To Cart', color: TEAL, keyX: 251, max: 1, data: [] }
    ]
});
```
